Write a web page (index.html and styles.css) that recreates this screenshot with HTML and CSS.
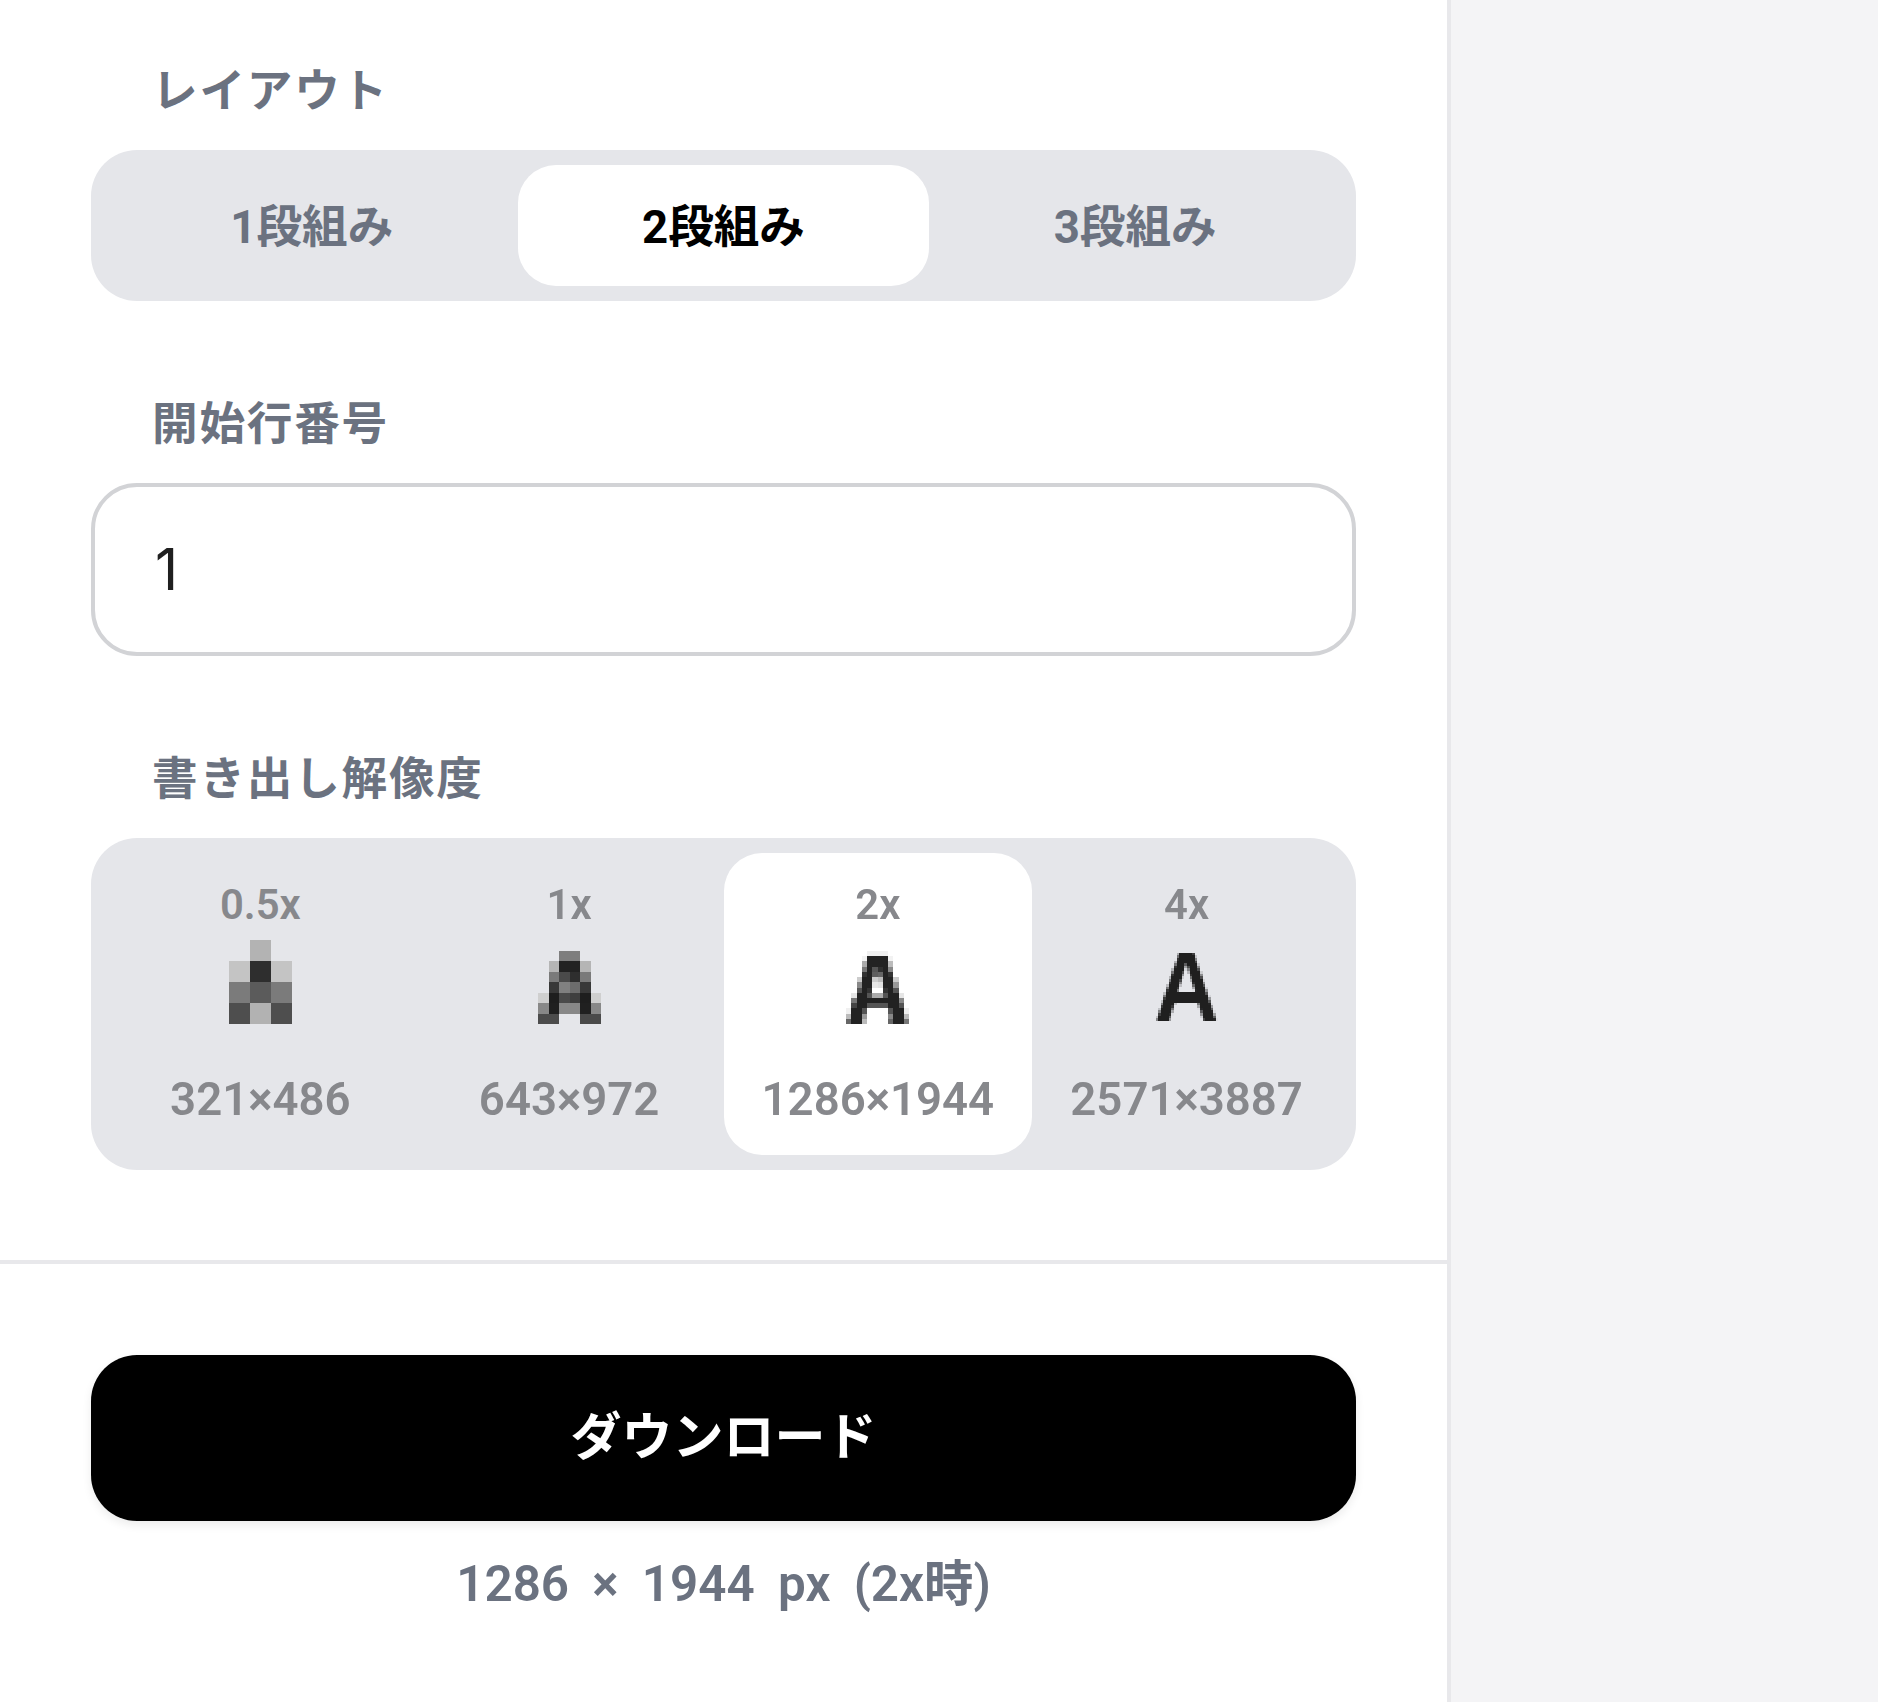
FILE: index.html
```html
<!doctype html>
<html lang="ja">
  <head>
    <meta charset="UTF-8" />
    <title>書き出し設定</title>
    <link rel="stylesheet" href="styles.css">
  </head>
  <body>
    <aside class="sidebar">
      <div class="settings">
        <div class="field">
          <div class="field-label">レイアウト</div>
          <div class="segment segment-3">
            <button class="segment-item">1段組み</button>
            <button class="segment-item active">2段組み</button>
            <button class="segment-item">3段組み</button>
          </div>
        </div>

        <div class="field">
          <label class="field-label" for="startLine">開始行番号</label>
          <input class="text-input" id="startLine" type="text" value="1" />
        </div>

        <div class="field">
          <div class="field-label">書き出し解像度</div>
          <div class="segment segment-4">
            <div class="scale-item">
              <span class="scale-name">0.5x</span>
              <div class="scale-preview"><canvas data-scale="0.5x"></canvas></div>
              <span class="scale-size">321×486</span>
            </div>
            <div class="scale-item">
              <span class="scale-name">1x</span>
              <div class="scale-preview"><canvas data-scale="1x"></canvas></div>
              <span class="scale-size">643×972</span>
            </div>
            <div class="scale-item active">
              <span class="scale-name">2x</span>
              <div class="scale-preview"><canvas data-scale="2x"></canvas></div>
              <span class="scale-size">1286×1944</span>
            </div>
            <div class="scale-item">
              <span class="scale-name">4x</span>
              <div class="scale-preview"><canvas class="preview-big" data-scale="4x"></canvas></div>
              <span class="scale-size">2571×3887</span>
            </div>
          </div>
        </div>
      </div>

      <div class="download">
        <button class="download-button">ダウンロード</button>
        <div class="download-size">1286 × 1944 px (2x時)</div>
      </div>
    </aside>
    <main class="stage"></main>
    <script src="previews.js"></script>
  </body>
</html>
```

FILE: styles.css
```css
:root {
  --gray-text: #6b7280;
  --muted-text: #87888c;
  --segment-bg: #e5e6ea;
  --line-color: #e8e8eb;
}

* {
  margin: 0;
  padding: 0;
  box-sizing: border-box;
}

body {
  font-family: "Roboto", "Noto Sans CJK JP", sans-serif;
  background-color: #f4f4f6;
  min-height: 1702px;
  display: flex;
}

.sidebar {
  width: 1451px;
  background-color: #ffffff;
  border-right: 4px solid var(--line-color);
}

.settings {
  padding: 67px 91px 90px;
  display: flex;
  flex-direction: column;
  gap: 99px;
  border-bottom: 4px solid var(--line-color);
}

.field-label {
  display: block;
  padding: 2px 0 0 61px;
  margin-bottom: 35px;
  font-size: 45.6px;
  line-height: 46px;
  font-weight: 700;
  letter-spacing: 1.8px;
  color: var(--gray-text);
}

.segment {
  display: grid;
  padding: 15px;
  background-color: var(--segment-bg);
  border-radius: 46px;
}

.segment-3 {
  grid-template-columns: repeat(3, 1fr);
}

.segment-4 {
  grid-template-columns: repeat(4, 1fr);
}

.segment-item {
  height: 121px;
  padding-bottom: 6px;
  border: none;
  border-radius: 38px;
  background: none;
  font-family: inherit;
  font-size: 45.6px;
  font-weight: 700;
  color: var(--gray-text);
}

.segment-item.active {
  background-color: #ffffff;
  color: #000000;
}

.scale-item {
  height: 302px;
  padding-top: 31px;
  border-radius: 38px;
  display: flex;
  flex-direction: column;
  align-items: center;
  color: var(--muted-text);
  font-weight: 600;
}

.scale-item.active {
  background-color: #ffffff;
}

.scale-name {
  font-size: 41.8px;
  line-height: 42px;
}

.scale-preview {
  height: 94px;
  margin-top: 4px;
  display: flex;
  align-items: flex-end;
  justify-content: center;
}

.scale-preview canvas {
  display: block;
  image-rendering: pixelated;
}

.preview-big {
  margin-bottom: 3px;
}

.scale-size {
  margin-top: 51px;
  font-size: 45.6px;
  line-height: 50px;
  white-space: nowrap;
}

.download {
  padding: 91px 91px 0;
}

.download-button {
  width: 100%;
  height: 166px;
  padding-bottom: 10px;
  border: none;
  border-radius: 46px;
  background-color: #000000;
  color: #ffffff;
  font-family: inherit;
  font-size: 51px;
  font-weight: 600;
  box-shadow: 0 4px 10px rgba(0, 0, 0, 0.08);
}

.download-size {
  margin-top: 40px;
  text-align: center;
  font-size: 49.4px;
  line-height: 46px;
  font-weight: 600;
  word-spacing: 11px;
  color: var(--gray-text);
}

.text-input {
  display: block;
  width: 100%;
  height: 173px;
  padding: 0 60px;
  border: 4px solid #d2d3d6;
  border-radius: 46px;
  font-family: "Inter", sans-serif;
  font-size: 57px;
  font-weight: 400;
  color: #1f1f1f;
  background-color: #ffffff;
}

.stage {
  flex: 1;
}
```

FILE: previews.js
```js
// Gray levels of the downsampled "A", one string per row, "--" is transparent.
const pixels = {
  "0.5x": {
    size: 21,
    rows: ["-- b3 --", "c4 2e c4", "7b 5b 7b", "4e b2 4e"],
  },
  "1x": {
    size: 10.5,
    rows: [
      "-- -- 7e 7e -- --",
      "-- b5 22 22 b5 --",
      "-- 7a 4a 2e 7a --",
      "-- 38 80 6c 38 --",
      "cf 1e 4a 3e 1e cf",
      "88 20 88 88 20 88",
      "4c 4c -- -- 4a 4a",
    ],
  },
  "2x": {
    size: 5.25,
    rows: [
      "-- -- -- -- f0 f0 f0 f0 -- -- -- --",
      "-- -- -- f2 22 22 22 22 f2 -- -- --",
      "-- -- -- aa 22 22 22 22 bb -- -- --",
      "-- -- -- 77 22 55 30 22 88 -- -- --",
      "-- -- -- 33 22 5e 66 22 33 -- -- --",
      "-- -- cc 22 22 cc bb 22 22 cc -- --",
      "-- -- 88 22 22 e6 e0 22 22 99 -- --",
      "-- -- 55 22 33 -- -- 33 22 55 -- --",
      "-- e6 22 22 55 aa aa 55 22 22 e6 --",
      "-- 77 22 22 22 22 22 22 22 22 88 --",
      "-- 44 22 22 55 55 55 55 22 22 55 --",
      "f0 22 22 55 -- -- -- -- 55 22 22 ee",
      "bb 22 22 99 -- -- -- -- 88 22 22 bb",
      "66 22 22 bb -- -- -- -- 66 22 22 77",
    ],
  },
};

function drawPixels(canvas, data) {
  const rows = data.rows.map((row) => row.split(" "));
  canvas.width = rows[0].length;
  canvas.height = rows.length;
  canvas.style.width = `${canvas.width * data.size}px`;
  canvas.style.height = `${canvas.height * data.size}px`;

  const ctx = canvas.getContext("2d");
  rows.forEach((row, y) => {
    row.forEach((gray, x) => {
      if (gray === "--") return;
      ctx.fillStyle = `#${gray}${gray}${gray}`;
      ctx.fillRect(x, y, 1, 1);
    });
  });
}

function drawLetter(canvas, size) {
  canvas.width = 26;
  canvas.height = 27;
  canvas.style.width = `${canvas.width * size}px`;
  canvas.style.height = `${canvas.height * size}px`;

  const ctx = canvas.getContext("2d");
  ctx.fillStyle = "#1f1f1f";
  ctx.font = 'bold 37px "Liberation Sans"';
  ctx.textAlign = "center";
  ctx.translate(12.7, 27);
  ctx.scale(0.92, 1);
  ctx.fillText("A", 0, 0);
}

document.querySelectorAll("canvas[data-scale]").forEach((canvas) => {
  const data = pixels[canvas.dataset.scale];
  if (data) {
    drawPixels(canvas, data);
  } else {
    drawLetter(canvas, 2.625);
  }
});
```
